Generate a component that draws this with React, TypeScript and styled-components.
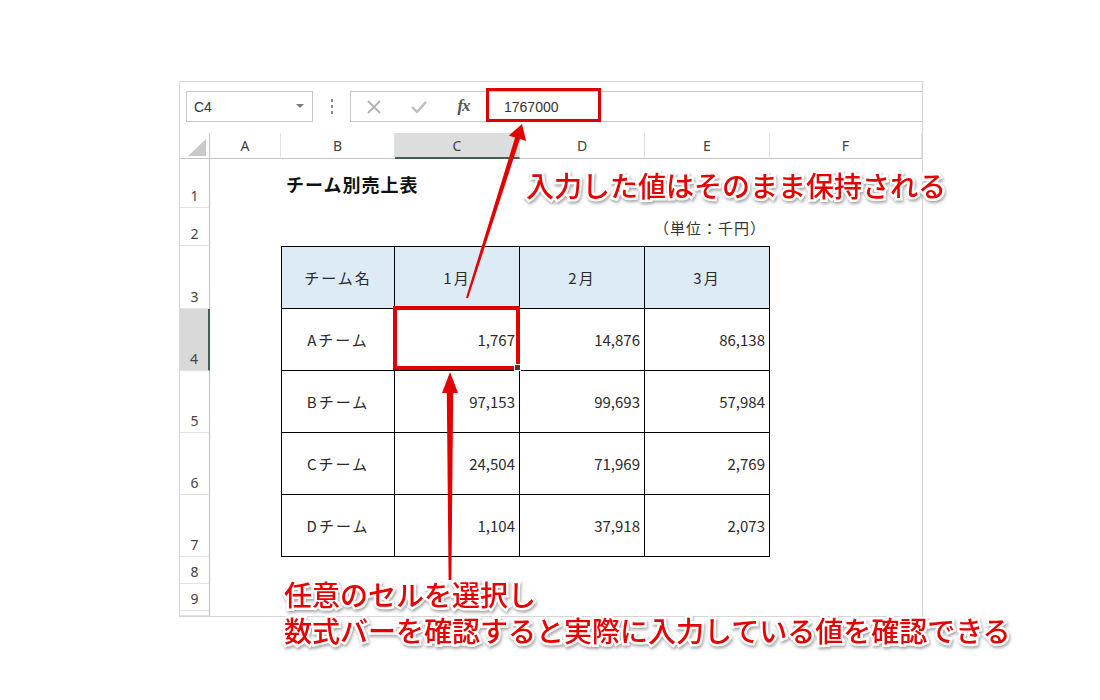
import styled, { createGlobalStyle } from 'styled-components';

// --- GLOBAL ---
const GlobalStyle = createGlobalStyle`
  body {
    margin: 0;
    background: #fff;
    font-family: "Noto Sans CJK JP", "Noto Sans", sans-serif;
  }
`;

// --- LAYOUT ---
const Page = styled.div`
  position: relative;
  width: 1100px;
  height: 700px;
  padding: 81px 0 0 179px;
  box-sizing: border-box;
  overflow: hidden;
`;

const Window = styled.div`
  width: 744px;
  height: 536px;
  border: 1px solid #d6d6d6;
  box-sizing: border-box;
  display: flex;
  flex-direction: column;
  background: #fff;
  overflow: hidden;
`;

// --- FORMULA BAR ---
const FormulaBar = styled.div`
  height: 51px;
  flex: none;
  display: flex;
  align-items: flex-start;
  padding: 9px 0 0 6px;
  box-sizing: border-box;
`;

const NameBox = styled.div`
  width: 127px;
  height: 31px;
  border: 1px solid #c8c8c8;
  box-sizing: border-box;
  display: flex;
  align-items: center;
  justify-content: space-between;
  padding: 0 8px 0 7px;
  font: 14px "Liberation Sans", Arial, sans-serif;
  color: #333;
`;

const DropCaret = styled.span`
  width: 0;
  height: 0;
  border-left: 4px solid transparent;
  border-right: 4px solid transparent;
  border-top: 4px solid #7a7a7a;
  margin-bottom: 2px;
`;

const Grip = styled.div`
  width: 37px;
  height: 31px;
  display: flex;
  flex-direction: column;
  align-items: center;
  justify-content: center;
  gap: 3px;
`;

const GripDot = styled.span`
  width: 2px;
  height: 3px;
  background: #8a8a8a;
`;

const FormulaInput = styled.div`
  flex: 1;
  height: 31px;
  border: 1px solid #c8c8c8;
  border-right: none;
  box-sizing: border-box;
  display: flex;
  align-items: center;
`;

const IconSlot = styled.div`
  width: 45px;
  height: 100%;
  display: flex;
  align-items: center;
  justify-content: center;
`;

const FxLabel = styled.span`
  font: italic bold 17px "Liberation Serif", "Times New Roman", serif;
  color: #555;
  letter-spacing: -1px;
  margin-bottom: 2px;
`;

const FormulaValue = styled.div`
  padding-left: 18px;
  font: 14px "Liberation Sans", Arial, sans-serif;
  color: #333;
`;

// --- SHEET ---
const Sheet = styled.div`
  flex: 1;
  display: grid;
  grid-template-columns: 30px 71px 114px 125px 125px 125px 1fr;
  grid-template-rows: 26px 49px 38px 63px 62px 62px 62px 62px 27px 27px 1fr;
`;

const Corner = styled.div`
  border-right: 1px solid #c4c4c4;
  border-bottom: 1px solid #c4c4c4;
  display: flex;
  align-items: flex-end;
  justify-content: flex-end;
  padding: 0 3px 2px 0;
  box-sizing: border-box;
`;

const ColHeader = styled.div<{ $active?: boolean }>`
  display: flex;
  align-items: center;
  justify-content: center;
  box-sizing: border-box;
  background: ${p => (p.$active ? '#dcdedd' : '#fff')};
  border-right: 1px solid #e2e2e2;
  border-bottom: ${p => (p.$active ? '2px solid #43604f' : '1px solid #c4c4c4')};
  font: 14px "Noto Sans", "Liberation Sans", sans-serif;
  color: #444;
  padding-top: ${p => (p.$active ? '1px' : '0')};
`;

const RowHeader = styled.div<{ $active?: boolean }>`
  display: flex;
  align-items: flex-end;
  justify-content: center;
  box-sizing: border-box;
  padding-bottom: 2px;
  background: ${p => (p.$active ? '#d9d9d9' : '#fff')};
  border-right: ${p => (p.$active ? '2px solid #43604f' : '1px solid #bcbcbc')};
  border-bottom: 1px solid #e2e2e2;
  font: 14px "Noto Sans", "Liberation Sans", sans-serif;
  color: #444;
  overflow: hidden;
`;

const Cell = styled.div<{
  $table?: boolean;
  $head?: boolean;
  $left?: boolean;
  $top?: boolean;
  $align?: 'left' | 'center' | 'right';
}>`
  display: flex;
  align-items: center;
  justify-content: ${p =>
    p.$align === 'center' ? 'center' : p.$align === 'right' ? 'flex-end' : 'flex-start'};
  box-sizing: border-box;
  padding: 0 4px;
  white-space: nowrap;
  overflow: visible;
  font-size: 15px;
  color: #2a2a2a;
  background: ${p => (p.$head ? '#ddebf7' : 'transparent')};
  border-right: ${p => (p.$table ? '1px solid #000' : 'none')};
  border-bottom: ${p => (p.$table ? '1px solid #000' : 'none')};
  border-left: ${p => (p.$left ? '1px solid #000' : 'none')};
  border-top: ${p => (p.$top ? '1px solid #000' : 'none')};
`;

const Title = styled.span`
  font-size: 18px;
  font-weight: 700;
  color: #111;
  letter-spacing: 1px;
  margin-left: 1px;
`;

const Unit = styled.span`
  font-size: 15px;
  color: #333;
  letter-spacing: 1px;
`;

const Label = styled.span`
  letter-spacing: 2px;
`;

// --- ANNOTATIONS ---
const ArrowLayer = styled.svg`
  position: absolute;
  left: 0;
  top: 0;
  pointer-events: none;
`;

const RedBox = styled.div<{ $w: number }>`
  position: absolute;
  border: ${p => p.$w}px solid #e10000;
  box-sizing: border-box;
`;

const FillHandle = styled.span`
  position: absolute;
  right: -5px;
  bottom: -5px;
  width: 5px;
  height: 5px;
  background: #3d3d3d;
  border: 1px solid #fff;
`;

const Callout = styled.div`
  position: absolute;
  font-family: "Noto Sans CJK JP", sans-serif;
  font-size: 28px;
  font-weight: 500;
  line-height: 36px;
  color: #e60000;
  white-space: nowrap;
  -webkit-text-stroke: 5px #fff;
  paint-order: stroke fill;
  filter: drop-shadow(1px 2px 1.5px rgba(0, 0, 0, 0.35));
`;

// --- DATA ---
const columns = ['A', 'B', 'C', 'D', 'E', 'F'];
const header = ['チーム名', '1月', '2月', '3月'];
const body = [
  ['Aチーム', '1,767', '14,876', '86,138'],
  ['Bチーム', '97,153', '99,693', '57,984'],
  ['Cチーム', '24,504', '71,969', '2,769'],
  ['Dチーム', '1,104', '37,918', '2,073'],
];

function XIcon() {
  return (
    <svg width="16" height="16" viewBox="0 0 16 16">
      <path d="M2 2 L14 14 M14 2 L2 14" stroke="#b3b3b3" strokeWidth="1.8" fill="none" />
    </svg>
  );
}

function CheckIcon() {
  return (
    <svg width="18" height="16" viewBox="0 0 18 16">
      <path d="M2 8 L7 13 L16 3" stroke="#bdbdbd" strokeWidth="2.4" fill="none" />
    </svg>
  );
}

function CornerMark() {
  return (
    <svg width="18" height="17" viewBox="0 0 18 17">
      <polygon points="18,0 18,17 0,17" fill="#c9c9c9" />
    </svg>
  );
}

export default function App() {
  const renderRow = (r: number) => {
    const cells = columns.map((c, ci) => {
      const key = `${c}${r}`;
      if (r === 1 && c === 'B') {
        return (
          <Cell key={key}>
            <Title>チーム別売上表</Title>
          </Cell>
        );
      }
      if (r === 2 && c === 'E') {
        return (
          <Cell key={key} $align="right">
            <Unit>（単位：千円）</Unit>
          </Cell>
        );
      }
      if (r >= 3 && r <= 7 && ci >= 1 && ci <= 4) {
        const isHead = r === 3;
        const text = isHead ? header[ci - 1] : body[r - 4][ci - 1];
        const first = ci === 1;
        return (
          <Cell
            key={key}
            $table
            $head={isHead}
            $left={first}
            $top={isHead}
            $align={isHead || first ? 'center' : 'right'}
          >
            {isHead || first ? <Label>{text}</Label> : text}
          </Cell>
        );
      }
      return <Cell key={key} />;
    });
    return [
      <RowHeader key={`rh${r}`} $active={r === 4}>
        {r <= 9 ? r : ''}
      </RowHeader>,
      ...cells,
    ];
  };

  return (
    <>
      <GlobalStyle />
      <Page>
        <Window>
          <FormulaBar>
            <NameBox>
              C4
              <DropCaret />
            </NameBox>
            <Grip>
              <GripDot />
              <GripDot />
              <GripDot />
            </Grip>
            <FormulaInput>
              <IconSlot>
                <XIcon />
              </IconSlot>
              <IconSlot>
                <CheckIcon />
              </IconSlot>
              <IconSlot>
                <FxLabel>fx</FxLabel>
              </IconSlot>
              <FormulaValue>1767000</FormulaValue>
            </FormulaInput>
          </FormulaBar>

          <Sheet>
            <Corner>
              <CornerMark />
            </Corner>
            {columns.map(c => (
              <ColHeader key={c} $active={c === 'C'}>
                {c}
              </ColHeader>
            ))}
            {[1, 2, 3, 4, 5, 6, 7, 8, 9, 10].map(renderRow)}
          </Sheet>
        </Window>

        <RedBox $w={3} style={{ left: 486, top: 88, width: 115, height: 34 }} />
        <RedBox $w={4} style={{ left: 393, top: 306, width: 127, height: 64 }}>
          <FillHandle />
        </RedBox>

        <ArrowLayer width="1100" height="700" viewBox="0 0 1100 700">
          <polygon
            fill="#e30000"
            points="522,124 526.1,141 519.9,139.1 468,298.3 466,297.7 515.1,137.5 508.9,135.6"
          />
          <polygon
            fill="#e30000"
            points="450,372 458,393 453.2,393 451.4,580 448.6,580 446.8,393 442,393"
          />
        </ArrowLayer>

        <Callout style={{ left: 526, top: 167 }}>入力した値はそのまま保持される</Callout>
        <Callout style={{ left: 284, top: 576 }}>
          任意のセルを選択し
          <br />
          数式バーを確認すると実際に入力している値を確認できる
        </Callout>
      </Page>
    </>
  );
}
